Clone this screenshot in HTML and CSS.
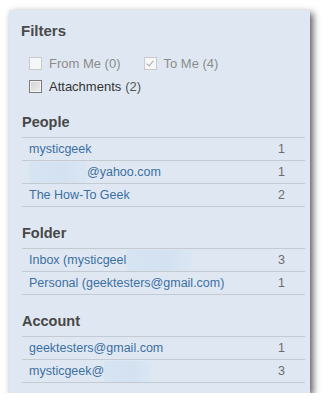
FILE: index.html
```html
<!DOCTYPE html>
<html>
<head>
<meta charset="UTF-8">
<link rel="stylesheet" href="styles.css">
</head>
<body>
<div class="panel">
	<h2 class="title">Filters</h2>
	<div class="filters">
		<div class="frow">
			<label class="chk off"><span class="box"></span>From Me (0)</label>
			<label class="chk off"><span class="box checked"></span>To Me (4)</label>
		</div>
		<div class="frow">
			<label class="chk"><span class="box on"></span>Attachments <span class="num">(2)</span></label>
		</div>
	</div>

	<h3 class="head first">People</h3>
	<ul class="list">
		<li><a href="javascript:;">mysticgeek</a><span class="cnt">1</span></li>
		<li><a href="javascript:;"><span class="blur w58"></span>@yahoo.com</a><span class="cnt">1</span></li>
		<li><a href="javascript:;">The How-To Geek</a><span class="cnt">2</span></li>
	</ul>

	<h3 class="head">Folder</h3>
	<ul class="list">
		<li><a href="javascript:;">Inbox (mysticgeel<span class="blur w66"></span></a><span class="cnt">3</span></li>
		<li><a href="javascript:;">Personal (geektesters@gmail.com)</a><span class="cnt">1</span></li>
	</ul>

	<h3 class="head last">Account</h3>
	<ul class="list">
		<li><a href="javascript:;">geektesters@gmail.com</a><span class="cnt">1</span></li>
		<li><a href="javascript:;">mysticgeek@<span class="blur w47"></span></a><span class="cnt">3</span></li>
	</ul>
</div>
</body>
</html>
```

FILE: styles.css
```css
*{margin: 0;padding: 0;list-style: none;}
body{background: #fff;font-family: "Liberation Sans", Arial, sans-serif;}

.panel{width: 283px;height: 371px;margin: 10px 0 0 9px;
	padding: 12px 5px 0 13px;
	background: #dfe8f2;
	box-shadow: 3px 3px 7px rgba(0,0,0,0.65);
}

.title{font-size: 15px;line-height: 18px;font-weight: bold;color: #4a4a4a;
	margin-left: -1px;}

.filters{margin-top: 12px;padding-left: 7px;}
.frow{height: 23px;display: flex;align-items: center;}
.chk{display: flex;align-items: center;font-size: 13px;color: #333;margin-right: 23px;}
.chk.off{color: #8c8c8c;}
.chk .num{color: #555;margin-left: 4px;}

.box{width: 11px;height: 11px;border: 1px solid #c9c9c9;background: #f6f7f8;
	margin-right: 7px;position: relative;}
.box.on{border-color: #7b7b7b;
	background: linear-gradient(135deg, #d2d2d2 0%, #eeeeee 100%);
	box-shadow: inset 0 0 0 1px #f4f4f4;}
.box.checked::after{content: "";position: absolute;left: 3px;top: 1px;
	width: 3px;height: 6px;border: solid #a9a9a9;border-width: 0 1px 1px 0;
	transform: rotate(40deg);}

.head{font-size: 14.5px;line-height: 18px;font-weight: bold;color: #474747;
	margin: 17px 0 0 0;padding: 0 0 6px 0;}
.head.first{margin-top: 15px;}
.head.last{margin-top: 17px;}

.list{border-top: 1px solid #c3cad2;}
.list li{height: 22px;border-bottom: 1px solid #c3cad2;
	display: flex;align-items: center;justify-content: space-between;
	padding: 0 20px 0 7px;font-size: 12.5px;}
.list a{color: #3d6fa3;text-decoration: none;display: flex;align-items: center;}
.list .cnt{color: #6d6d6d;}

.blur{display: inline-block;height: 21px;
	background: linear-gradient(90deg, #d7e4f2 0%, #d3e1f1 60%, #dae6f2 100%);}
.w58{width: 58px;}
.w66{width: 66px;}
.w47{width: 47px;}
```
